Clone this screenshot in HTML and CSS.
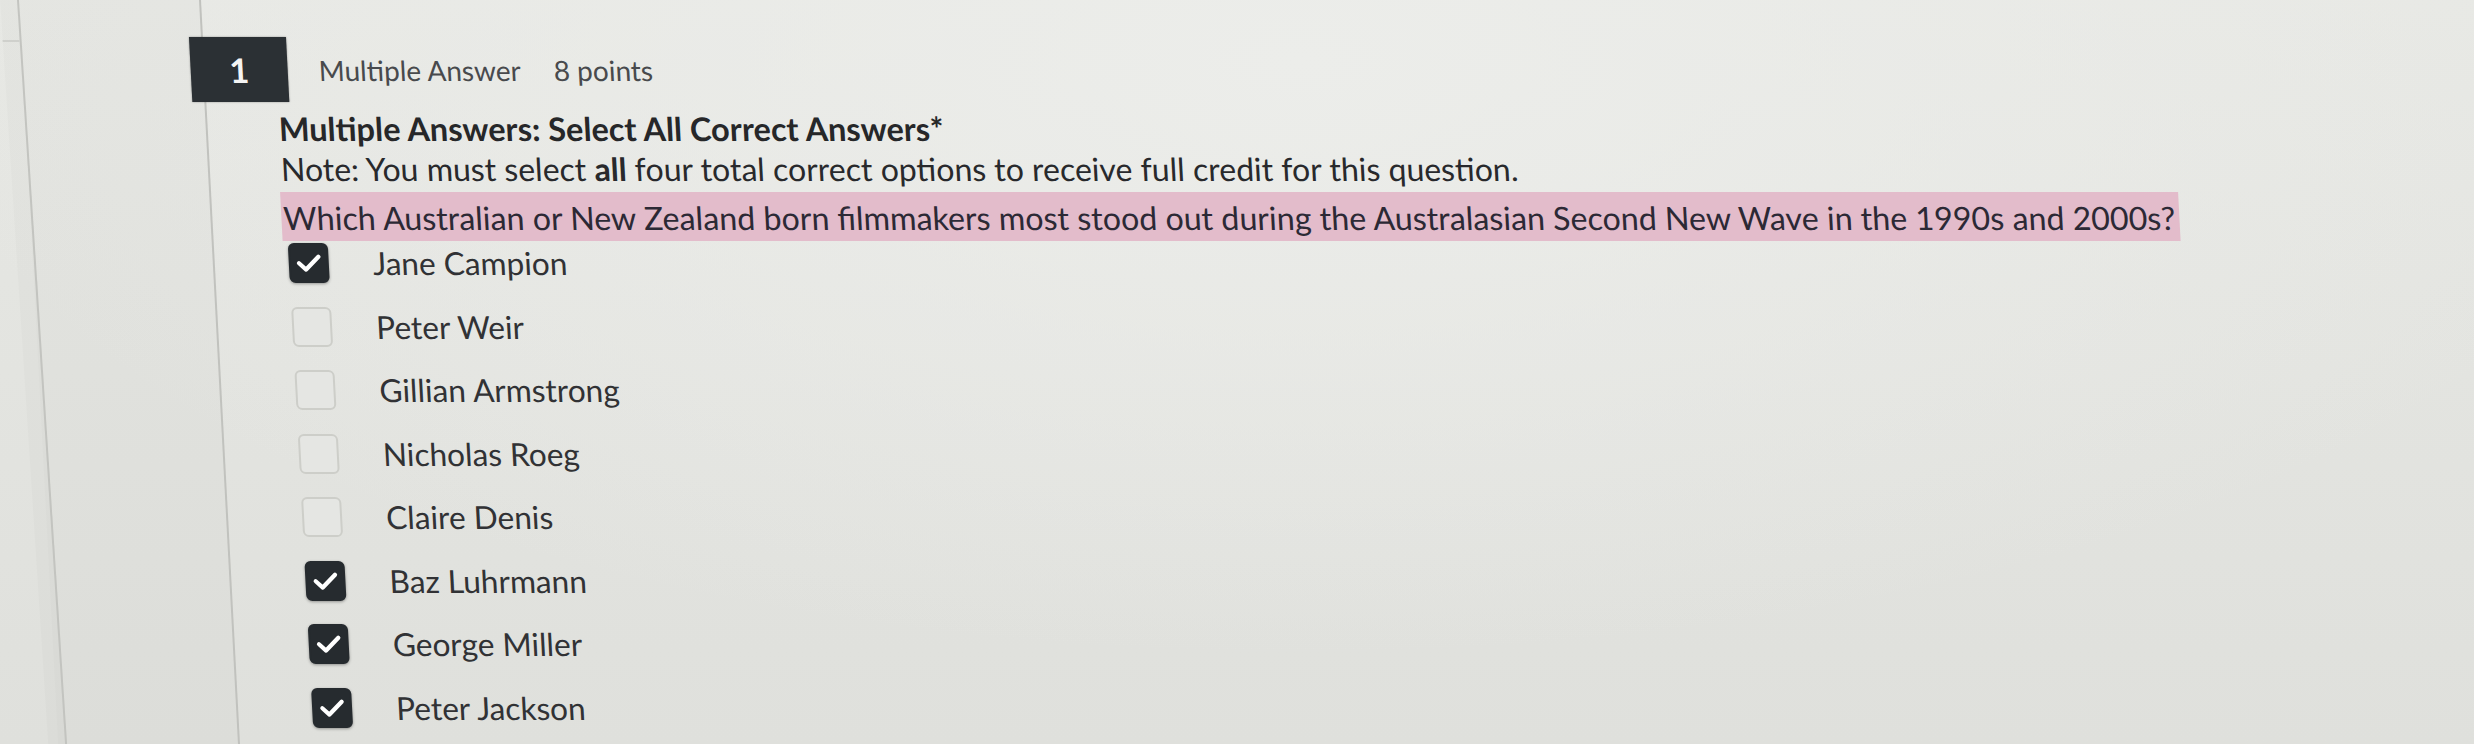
FILE: index.html
```html
<!DOCTYPE html>
<html lang="en">
<head>
<meta charset="utf-8">
<title>Question 1</title>
<link rel="stylesheet" href="styles.css">
</head>
<body>
<div class="page">
  <div class="rail"><div class="rail-top"></div></div>
  <div class="gutter"></div>
  <main class="main">
    <div class="qhead">
      <div class="qnum">1</div>
      <span class="qtype">Multiple Answer</span>
      <span class="qpoints">8 points</span>
    </div>
    <div class="qbody">
      <p class="qtitle">Multiple Answers: Select All Correct Answers*</p>
      <p class="qnote">Note: You must select <strong>all</strong> four total correct options to receive full credit for this question.</p>
      <p class="qtext"><span class="hl">Which Australian or New Zealand born filmmakers most stood out during the Australasian Second New Wave in the 1990s and 2000s?</span></p>
      <ul class="options">
        <li class="option"><span class="box checked"><svg viewBox="0 0 24 24"><path d="M5.5 12.2 L10 16.4 L18.6 7.8"/></svg></span><span class="label">Jane Campion</span></li>
        <li class="option"><span class="box"></span><span class="label">Peter Weir</span></li>
        <li class="option"><span class="box"></span><span class="label">Gillian Armstrong</span></li>
        <li class="option"><span class="box"></span><span class="label">Nicholas Roeg</span></li>
        <li class="option"><span class="box"></span><span class="label">Claire Denis</span></li>
        <li class="option"><span class="box checked"><svg viewBox="0 0 24 24"><path d="M5.5 12.2 L10 16.4 L18.6 7.8"/></svg></span><span class="label">Baz Luhrmann</span></li>
        <li class="option"><span class="box checked"><svg viewBox="0 0 24 24"><path d="M5.5 12.2 L10 16.4 L18.6 7.8"/></svg></span><span class="label">George Miller</span></li>
        <li class="option"><span class="box checked"><svg viewBox="0 0 24 24"><path d="M5.5 12.2 L10 16.4 L18.6 7.8"/></svg></span><span class="label">Peter Jackson</span></li>
      </ul>
    </div>
  </main>
</div>
</body>
</html>
```
FILE: styles.css
```css
html, body {
  margin: 0;
  padding: 0;
}
body {
  width: 2474px;
  height: 744px;
  overflow: hidden;
  font-family: Lato, "Open Sans", sans-serif;
  color: #2c2d2f;
  background:
    radial-gradient(ellipse 1400px 600px at 1300px 60px, #ecedea 0%, rgba(236,237,234,0) 100%),
    linear-gradient(180deg, #e7e8e4 0%, #dfe0dc 100%);
}
.page {
  display: flex;
  height: 744px;
  transform: skewX(3deg);
  transform-origin: 0 0;
}
.rail {
  width: 17px;
  flex: none;
  border-right: 2px solid #c3c4c0;
  background: rgba(0,0,0,0.015);
  transform: skewX(0.7deg);
  transform-origin: 0 0;
}
.rail-top {
  height: 40px;
  border-bottom: 2px solid #cfd0cc;
}
.gutter {
  width: 180px;
  flex: none;
  border-right: 2px solid #c1c2be;
  background: rgba(0,0,0,0.012);
}
.main {
  flex: 1;
  padding-top: 37px;
}
.qhead {
  display: flex;
  align-items: center;
  margin-left: -14px;
}
.qnum {
  width: 97px;
  height: 65px;
  background: #2b3034;
  color: #f4f4f4;
  font-weight: 700;
  font-size: 34px;
  display: flex;
  align-items: center;
  justify-content: center;
  box-shadow: 0 0 2px rgba(0,0,0,0.4);
}
.qtype {
  margin-left: 31px;
  font-size: 28px;
  color: #484a4d;
}
.qpoints {
  margin-left: 33px;
  font-size: 28px;
  color: #484a4d;
}
.qbody {
  margin-left: 71px;
}
.qbody p {
  margin: 0;
}
.qtitle {
  margin-top: 7px !important;
  font-size: 32.5px;
  font-weight: 700;
  line-height: 40px;
  color: #262729;
}
.qnote {
  font-size: 32px;
  line-height: 40px;
  color: #28292c;
}
.qnote strong {
  font-weight: 700;
}
.qtext {
  font-size: 32.2px;
  line-height: 50px;
  padding-top: 4px !important;
  color: #2c2935;
}
.hl {
  background: #e3bccb;
  padding: 6px 4px 4px 2px;
  margin-left: -2px;
}
.options {
  list-style: none;
  margin: 0;
  padding: 0;
  display: flex;
  flex-direction: column;
  gap: 23.5px;
}
.option {
  display: flex;
  align-items: center;
  height: 40px;
}
.box {
  width: 36px;
  height: 36px;
  flex: none;
  margin-left: 3px;
  border-radius: 6px;
  border: 2px solid #cdcec9;
  background: #e5e6e3;
  display: flex;
  align-items: center;
  justify-content: center;
}
.box.checked {
  background: #262b2f;
  border-color: #262b2f;
  box-shadow: 0 1px 3px rgba(0,0,0,0.35);
}
.box svg {
  width: 36px;
  height: 36px;
}
.box path {
  fill: none;
  stroke: #ffffff;
  stroke-width: 2.8;
  stroke-linecap: round;
  stroke-linejoin: round;
}
.label {
  margin-left: 44px;
  font-size: 31.6px;
  color: #313235;
}
```
